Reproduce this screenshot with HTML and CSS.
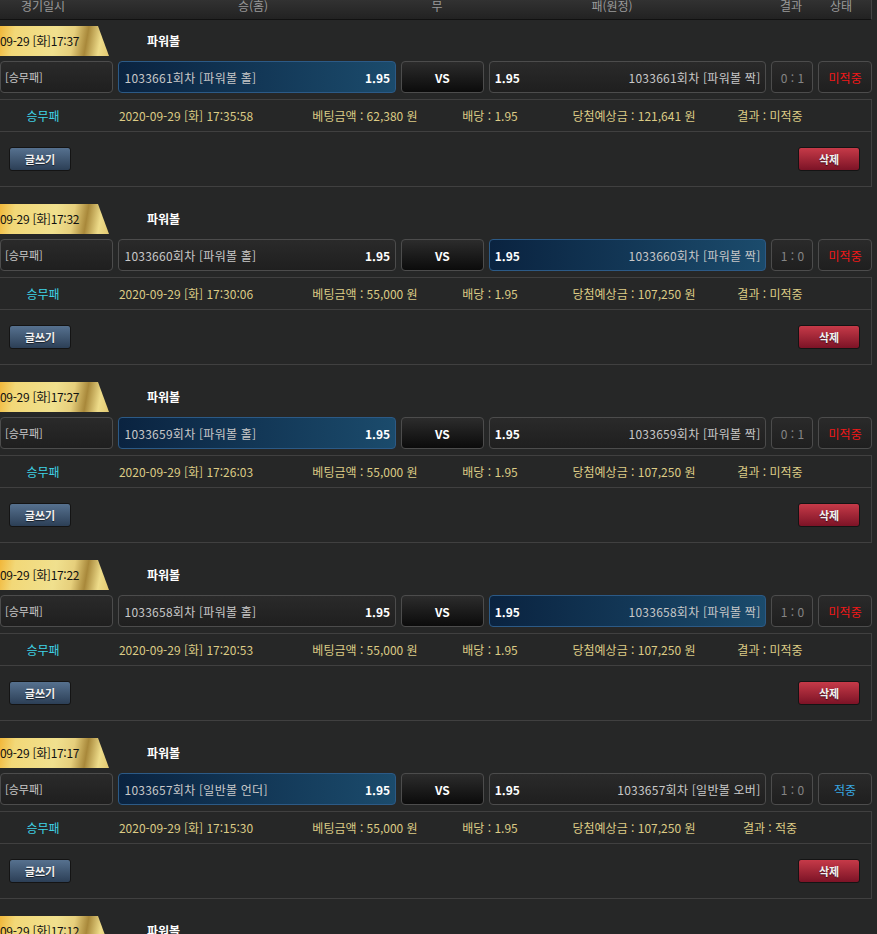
FILE: index.html
```html
<!DOCTYPE html>
<html lang="ko">
  <head>
    <meta charset="UTF-8" />
    <title>베팅내역</title>
    <link rel="stylesheet" href="styles.css">
  </head>
  <body>
    <div class="wrap">
      <div class="head">
        <span>경기일시</span>
        <span>승(홈)</span>
        <span>무</span>
        <span>패(원정)</span>
        <span>결과</span>
        <span>상태</span>
      </div>

      <!-- 1 -->
      <div class="bet">
        <div class="title">
          <div class="tag">09-29 [화]17:37</div>
          <div class="game">파워볼</div>
        </div>
        <div class="row">
          <div class="box type">[승무패]</div>
          <div class="box team sel"><span>1033661회차 [파워볼 홀]</span><b>1.95</b></div>
          <div class="box vs">VS</div>
          <div class="box team"><b>1.95</b><span>1033661회차 [파워볼 짝]</span></div>
          <div class="box score">0 : 1</div>
          <div class="box state lose">미적중</div>
        </div>
        <div class="detail">
          <div class="info">
            <span class="kind">승무패</span>
            <span>2020-09-29 [화] 17:35:58</span>
            <span>베팅금액 : 62,380 원</span>
            <span>배당 : 1.95</span>
            <span>당첨예상금 : 121,641 원</span>
            <span>결과 : 미적중</span>
          </div>
          <div class="actions">
            <button class="btn write">글쓰기</button>
            <button class="btn del">삭제</button>
          </div>
        </div>
      </div>

      <!-- 2 -->
      <div class="bet">
        <div class="title">
          <div class="tag">09-29 [화]17:32</div>
          <div class="game">파워볼</div>
        </div>
        <div class="row">
          <div class="box type">[승무패]</div>
          <div class="box team"><span>1033660회차 [파워볼 홀]</span><b>1.95</b></div>
          <div class="box vs">VS</div>
          <div class="box team sel"><b>1.95</b><span>1033660회차 [파워볼 짝]</span></div>
          <div class="box score">1 : 0</div>
          <div class="box state lose">미적중</div>
        </div>
        <div class="detail">
          <div class="info">
            <span class="kind">승무패</span>
            <span>2020-09-29 [화] 17:30:06</span>
            <span>베팅금액 : 55,000 원</span>
            <span>배당 : 1.95</span>
            <span>당첨예상금 : 107,250 원</span>
            <span>결과 : 미적중</span>
          </div>
          <div class="actions">
            <button class="btn write">글쓰기</button>
            <button class="btn del">삭제</button>
          </div>
        </div>
      </div>

      <!-- 3 -->
      <div class="bet">
        <div class="title">
          <div class="tag">09-29 [화]17:27</div>
          <div class="game">파워볼</div>
        </div>
        <div class="row">
          <div class="box type">[승무패]</div>
          <div class="box team sel"><span>1033659회차 [파워볼 홀]</span><b>1.95</b></div>
          <div class="box vs">VS</div>
          <div class="box team"><b>1.95</b><span>1033659회차 [파워볼 짝]</span></div>
          <div class="box score">0 : 1</div>
          <div class="box state lose">미적중</div>
        </div>
        <div class="detail">
          <div class="info">
            <span class="kind">승무패</span>
            <span>2020-09-29 [화] 17:26:03</span>
            <span>베팅금액 : 55,000 원</span>
            <span>배당 : 1.95</span>
            <span>당첨예상금 : 107,250 원</span>
            <span>결과 : 미적중</span>
          </div>
          <div class="actions">
            <button class="btn write">글쓰기</button>
            <button class="btn del">삭제</button>
          </div>
        </div>
      </div>

      <!-- 4 -->
      <div class="bet">
        <div class="title">
          <div class="tag">09-29 [화]17:22</div>
          <div class="game">파워볼</div>
        </div>
        <div class="row">
          <div class="box type">[승무패]</div>
          <div class="box team"><span>1033658회차 [파워볼 홀]</span><b>1.95</b></div>
          <div class="box vs">VS</div>
          <div class="box team sel"><b>1.95</b><span>1033658회차 [파워볼 짝]</span></div>
          <div class="box score">1 : 0</div>
          <div class="box state lose">미적중</div>
        </div>
        <div class="detail">
          <div class="info">
            <span class="kind">승무패</span>
            <span>2020-09-29 [화] 17:20:53</span>
            <span>베팅금액 : 55,000 원</span>
            <span>배당 : 1.95</span>
            <span>당첨예상금 : 107,250 원</span>
            <span>결과 : 미적중</span>
          </div>
          <div class="actions">
            <button class="btn write">글쓰기</button>
            <button class="btn del">삭제</button>
          </div>
        </div>
      </div>

      <!-- 5 -->
      <div class="bet">
        <div class="title">
          <div class="tag">09-29 [화]17:17</div>
          <div class="game">파워볼</div>
        </div>
        <div class="row">
          <div class="box type">[승무패]</div>
          <div class="box team sel"><span>1033657회차 [일반볼 언더]</span><b>1.95</b></div>
          <div class="box vs">VS</div>
          <div class="box team"><b>1.95</b><span>1033657회차 [일반볼 오버]</span></div>
          <div class="box score">1 : 0</div>
          <div class="box state win">적중</div>
        </div>
        <div class="detail">
          <div class="info">
            <span class="kind">승무패</span>
            <span>2020-09-29 [화] 17:15:30</span>
            <span>베팅금액 : 55,000 원</span>
            <span>배당 : 1.95</span>
            <span>당첨예상금 : 107,250 원</span>
            <span>결과 : 적중</span>
          </div>
          <div class="actions">
            <button class="btn write">글쓰기</button>
            <button class="btn del">삭제</button>
          </div>
        </div>
      </div>

      <!-- 6 -->
      <div class="bet">
        <div class="title">
          <div class="tag">09-29 [화]17:12</div>
          <div class="game">파워볼</div>
        </div>
      </div>
    </div>
  </body>
</html>
```
FILE: styles.css
```css
* {
  margin: 0;
  padding: 0;
  box-sizing: border-box;
}

body {
  background: #262727;
  font-family: "Noto Sans CJK KR", "Noto Sans", sans-serif;
  font-size: 12px;
  color: #c8c8c8;
  overflow: hidden;
}

.wrap {
  width: 872px;
  padding-top: 7px;
}

.head {
  display: grid;
  grid-template-columns: 86px 334px 34px 316px 42px 58px;
  height: 30px;
  margin-top: -17px;
  padding-top: 1px;
  line-height: 30px;
  text-align: center;
  color: #9a9a9a;
  background: linear-gradient(#3a3a3a, #222);
  border-bottom: 1px solid #111;
  border-right: 1px solid #444;
}

.bet {
  margin-top: 6px;
  margin-bottom: 17px;
}

.title {
  display: flex;
  align-items: center;
  height: 30px;
}

.tag {
  width: 109px;
  height: 30px;
  line-height: 30px;
  color: #111;
  letter-spacing: -0.3px;
  clip-path: polygon(0 0, 98px 0, 109px 100%, 0 100%);
  background: linear-gradient(100deg, #f1b73a 0%, #f2d878 14%, #f0e08e 50%, #e6cf7c 66%, #a8883a 78%, #eedc8a 90%, #e2c870 100%);
}

.game {
  margin-left: 38px;
  margin-top: -2px;
  font-weight: bold;
  color: #fff;
}

.row {
  display: flex;
  gap: 5px;
  margin-top: 5px;
  height: 32px;
}

.box {
  display: flex;
  align-items: center;
  height: 32px;
  border: 1px solid #4c4c4c;
  border-radius: 4px;
  background: linear-gradient(#2a2a2a, #1f1f1f);
}

.type {
  width: 114px;
  padding-left: 4px;
  font-size: 11px;
}

.team {
  width: 279px;
  padding: 0 5px;
  justify-content: space-between;
}

.team span {
  letter-spacing: 0.25px;
}

.team b {
  color: #fff;
}

.team.sel {
  border-color: #2c5a86;
  background: linear-gradient(to right, #0a2340, #1b4b6c);
}

.vs {
  width: 83px;
  justify-content: center;
  font-weight: bold;
  color: #fff;
  background: linear-gradient(#2c2c2c, #0b0b0b);
}

.score {
  width: 42px;
  justify-content: center;
  color: #858585;
}

.state {
  width: 54px;
  justify-content: center;
}

.lose {
  color: #f01818;
}

.win {
  color: #38a8e2;
}

.detail {
  margin-top: 6px;
  border: 1px solid #404040;
  border-left: none;
}

.info {
  display: grid;
  grid-template-columns: 86px 200px 158px 92px 196px 76px;
  height: 32px;
  align-items: center;
  text-align: center;
  color: #dccb85;
  border-bottom: 1px solid #404040;
}

.info .kind {
  color: #3fd3e6;
}

.actions {
  display: flex;
  justify-content: space-between;
  align-items: center;
  height: 54px;
  padding: 0 11px 0 9px;
}

.btn {
  width: 62px;
  height: 24px;
  border: 1px solid #141414;
  border-radius: 3px;
  font-family: "Noto Sans CJK KR", sans-serif;
  font-size: 11px;
  font-weight: bold;
  color: #f2f2f2;
  text-shadow: 0 1px 1px rgba(0,0,0,0.6);
  cursor: pointer;
}

.write {
  background: linear-gradient(#56718f, #2c3f56);
}

.del {
  background: linear-gradient(#c63a48, #7c1326);
}
```
